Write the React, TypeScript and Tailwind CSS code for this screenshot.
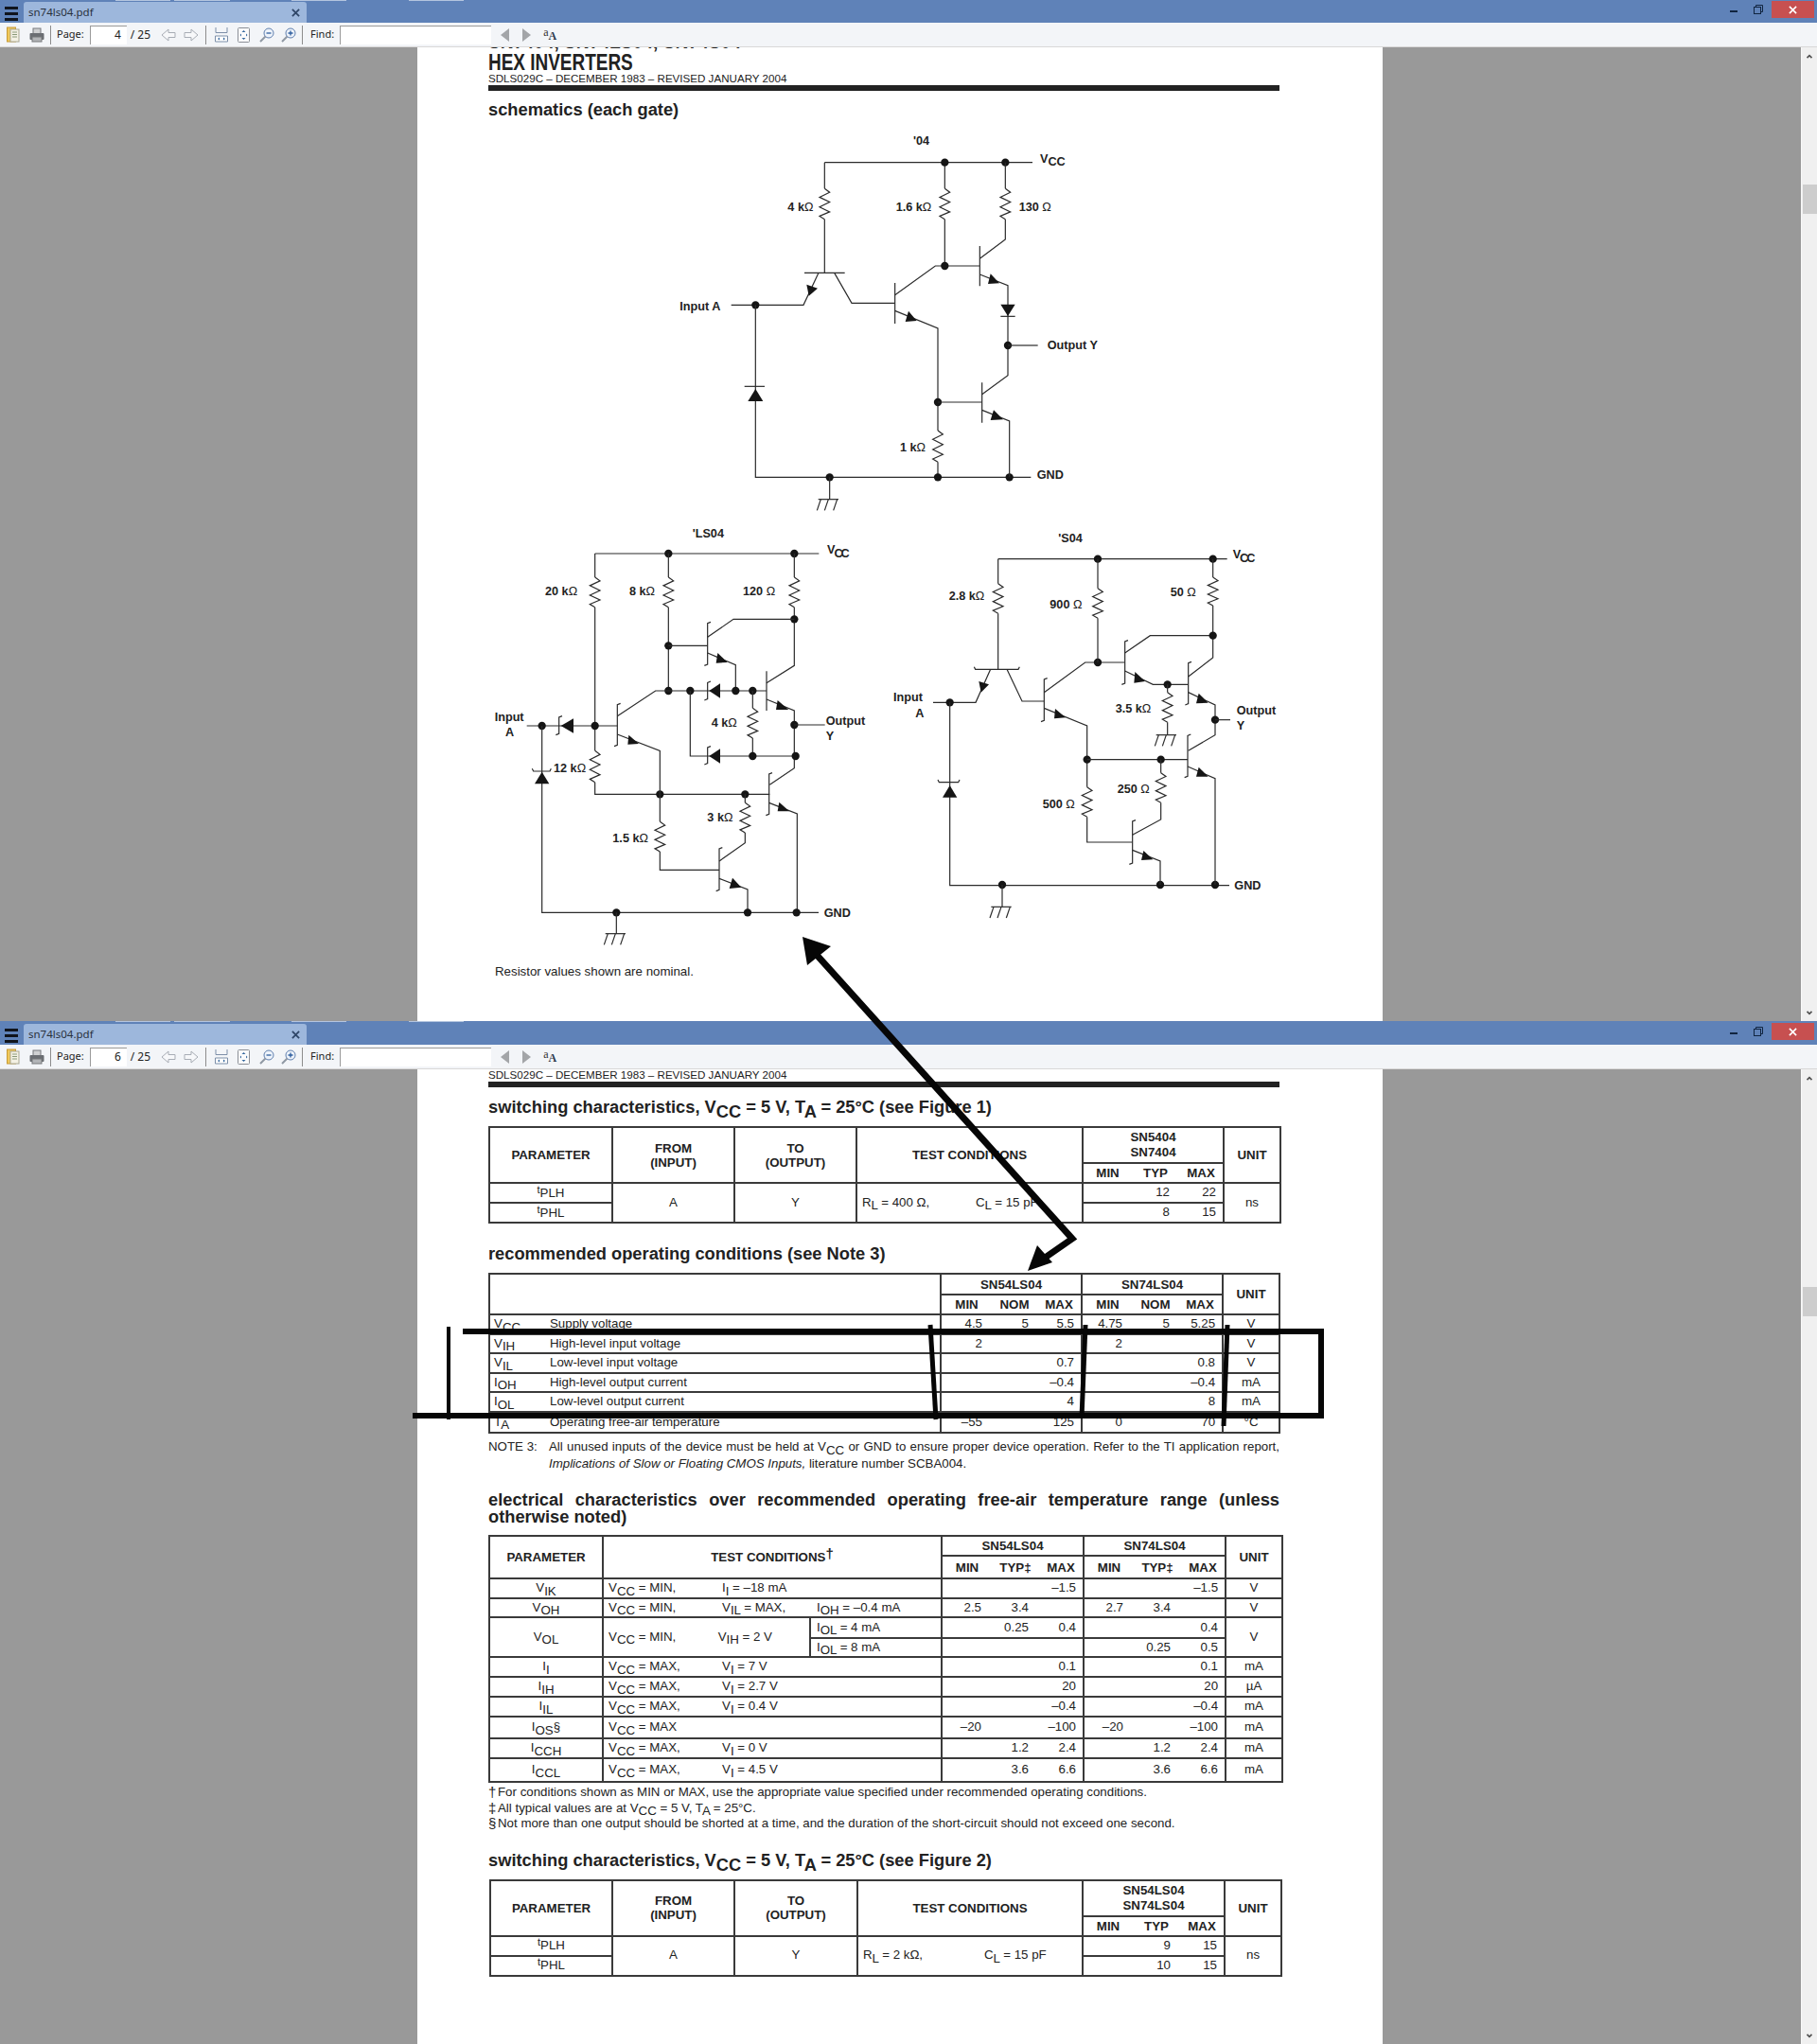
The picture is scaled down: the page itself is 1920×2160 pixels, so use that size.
import type { ReactNode } from "react";

const INK = "#2b2b2b";
const cell = "border-2 border-[#3a3a3a] p-0 pb-[2px] text-center";
const head = "border-2 border-[#3a3a3a] p-0 text-center font-bold";

function Sy({ a, b }: { a: string; b: string }) {
  return (
    <span className="whitespace-nowrap">
      {a}
      <sub className="text-[1em] bottom-[-0.3em]">{b}</sub>
    </span>
  );
}

function Tp({ b }: { b: string }) {
  return (
    <span className="whitespace-nowrap">
      <span className="relative top-[-3px] text-[11px]">t</span>
      <sub className="text-[1em] bottom-[-0.1em]">{b}</sub>
    </span>
  );
}

/* schematic helpers, coords are 3x page pixels */
function W({ p }: { p: string }) {
  return <polyline points={p} fill="none" stroke={INK} strokeWidth="3.6" />;
}
function D({ x, y }: { x: number; y: number }) {
  return <circle cx={x} cy={y} r="12.5" fill="#151515" />;
}
function A({ p }: { p: string }) {
  return <polygon points={p} fill="#151515" />;
}
function R({ x, y, h }: { x: number; y: number; h: number }) {
  const s = [0.12, 0.28, 0.44, 0.6, 0.76, 0.9];
  const pts = s.map((f, i) => `${i % 2 ? x - 16 : x + 16},${y + h * f}`).join(" ");
  return <W p={`${x},${y} ${pts} ${x},${y + h}`} />;
}
function Hook({ x, a, b }: { x: number; a: number; b: number }) {
  return <W p={`${x + 10},${a} ${x},${a + 4} ${x},${b - 4} ${x - 10},${b}`} />;
}
function HookH({ y, a, b }: { y: number; a: number; b: number }) {
  return <W p={`${a},${y - 8} ${a + 4},${y} ${b - 4},${y} ${b},${y - 8}`} />;
}
function Gnd({ x, y, w = 32 }: { x: number; y: number; w?: number }) {
  return (
    <>
      <W p={`${x - w},${y} ${x + w},${y}`} />
      <W p={`${x - w + 8},${y} ${x - w - 4},${y + 35}`} />
      <W p={`${x},${y} ${x - 12},${y + 35}`} />
      <W p={`${x + w - 4},${y} ${x + w - 16},${y + 35}`} />
    </>
  );
}
function L({ x, y, t, o, anchor }: { x: number; y: number; t: string; o?: boolean; anchor?: "end" | "middle" }) {
  return (
    <text x={x} y={y + 13} fontSize="38" fontWeight="700" fill="#222" textAnchor={anchor}>
      {t}
      {o && <tspan fontWeight="400">Ω</tspan>}
    </text>
  );
}
function Vcc({ x, y, tight }: { x: number; y: number; tight?: boolean }) {
  return (
    <text x={x} y={y + 13} fontSize="38" fontWeight="700" fill="#222">
      V
      <tspan dx={tight ? -3 : 0} dy="11" letterSpacing={tight ? -6 : 0}>
        CC
      </tspan>
    </text>
  );
}

function Schematic04() {
  return (
    <svg viewBox="0 0 1560 1260" className="block h-[420px] w-[520px] shrink-0">
      <L x={855} y={57} t="'04" />
      <W p="574,125 1233,125" />
      <W p="574,125 574,208" />
      <R x={574} y={208} h={97} />
      <W p="574,305 574,475" />
      <W p="510,475 638,475" />
      <W p="555,475 507,577 278,577" />
      <A p="517,512 552,524 524,548" />
      <W p="605,475 660,571 797,571" />
      <D x={355} y={577} />
      <W p="355,577 355,1123 1228,1123" />
      <W p="320,835 384,835" />
      <A p="355,843 331,882 379,882" />
      <D x={590} y={1123} />
      <W p="590,1123 590,1193" />
      <Gnd x={586} y={1193} />
      <W p="797,507 797,636" />
      <W p="797,545 925,453 1066,453" />
      <W p="797,595 933,651 933,975" />
      <A p="840,596 866,627 830,630" />
      <R x={933} y={975} h={100} />
      <W p="933,1075 933,1123" />
      <D x={933} y={885} />
      <D x={933} y={1123} />
      <D x={1160} y={1123} />
      <W p="955,125 955,208" />
      <R x={955} y={208} h={97} />
      <W p="955,305 955,453" />
      <D x={955} y={125} />
      <D x={1147} y={125} />
      <D x={955} y={453} />
      <W p="1147,125 1147,208" />
      <R x={1147} y={208} h={97} />
      <W p="1147,305 1147,369 1066,430" />
      <W p="1066,390 1066,517" />
      <W p="1066,480 1155,515 1155,800 1073,860" />
      <A p="1100,478 1128,508 1092,510" />
      <A p="1132,575 1178,575 1155,612" />
      <W p="1132,613 1178,613" />
      <D x={1155} y={705} />
      <W p="1155,705 1250,705" />
      <W p="1073,823 1073,950" />
      <W p="933,885 1073,885" />
      <W p="1073,910 1160,945 1160,1123" />
      <A p="1110,910 1140,940 1100,942" />
      <L x={115} y={582} t="Input A" />
      <L x={457} y={265} t="4 k" o />
      <L x={800} y={265} t="1.6 k" o />
      <L x={1190} y={265} t="130 " o />
      <L x={813} y={1028} t="1 k" o />
      <L x={1280} y={705} t="Output Y" />
      <L x={1247} y={1115} t="GND" />
      <Vcc x={1257} y={112} />
    </svg>
  );
}

function SchematicLS() {
  return (
    <svg viewBox="0 0 1260 1395" className="block h-[465px] w-[420px] shrink-0">
      <L x={695} y={40} t="'LS04" />
      <W p="386,105 1096,105" />
      <D x={619} y={105} />
      <D x={1018} y={105} />
      <W p="386,105 386,180" />
      <R x={386} y={180} h={95} />
      <W p="386,275 386,730" />
      <R x={386} y={730} h={100} />
      <W p="386,830 386,868 940,868" />
      <D x={592} y={868} />
      <D x={862} y={868} />
      <W p="619,105 619,180" />
      <R x={619} y={180} h={95} />
      <W p="619,275 619,540" />
      <D x={619} y={397} />
      <D x={619} y={540} />
      <W p="1018,105 1018,180" />
      <R x={1018} y={180} h={95} />
      <W p="1018,275 1018,460 930,515" />
      <D x={1018} y={313} />
      <Hook x={743} a={322} b={460} />
      <W p="743,370 825,313 1018,313" />
      <W p="619,397 743,397" />
      <W p="743,420 832,458 832,540" />
      <A p="775,420 806,450 770,452" />
      <W p="457,620 578,540 930,540" />
      <D x={688} y={540} />
      <D x={832} y={540} />
      <D x={886} y={540} />
      <A p="748,540 783,517 783,563" />
      <Hook x={743} a={510} b={570} />
      <Hook x={457} a={580} b={716} />
      <W p="170,651 457,651" />
      <W p="457,678 592,730 592,955" />
      <A p="493,680 525,708 490,710" />
      <D x={218} y={651} />
      <D x={386} y={651} />
      <A p="278,651 318,628 318,674" />
      <Hook x={272} a={620} b={680} />
      <W p="930,478 930,603" />
      <W p="930,567 1018,603 1018,785 940,838" />
      <A p="965,570 1000,600 960,600" />
      <D x={1018} y={648} />
      <W p="1018,648 1115,648" />
      <W p="886,540 886,595" />
      <R x={886} y={595} h={95} />
      <W p="886,690 886,747" />
      <W p="688,540 688,747 1022,747" />
      <D x={886} y={747} />
      <D x={1022} y={747} />
      <A p="748,747 783,724 783,770" />
      <Hook x={743} a={716} b={774} />
      <Hook x={938} a={800} b={935} />
      <W p="938,895 1027,930 1027,1243" />
      <A p="970,893 1002,922 965,922" />
      <W p="862,868 862,895" />
      <R x={862} y={895} h={95} />
      <W p="862,990 862,1022 780,1080" />
      <R x={592} y={955} h={95} />
      <W p="592,1050 592,1108 780,1108" />
      <Hook x={780} a={1037} b={1175} />
      <W p="780,1135 870,1170 870,1243" />
      <A p="822,1133 850,1163 812,1167" />
      <W p="218,651 218,1243 1095,1243" />
      <A p="218,797 195,835 241,835" />
      <HookH y={795} a={187} b={247} />
      <D x={454} y={1243} />
      <D x={870} y={1243} />
      <D x={1025} y={1243} />
      <W p="454,1243 454,1310" />
      <Gnd x={451} y={1310} />
      <L x={855} y={225} t="120 " o />
      <L x={228} y={225} t="20 k" o />
      <L x={495} y={225} t="8 k" o />
      <L x={68} y={622} t="Input" />
      <L x={102} y={672} t="A" />
      <L x={1118} y={634} t="Output" />
      <L x={1118} y={684} t="Y" />
      <L x={755} y={640} t="4 k" o />
      <L x={255} y={785} t="12 k" o />
      <L x={742} y={942} t="3 k" o />
      <L x={442} y={1008} t="1.5 k" o />
      <L x={1112} y={1243} t="GND" />
      <Vcc x={1122} y={93} tight />
    </svg>
  );
}

function SchematicS() {
  return (
    <svg viewBox="0 0 1350 1395" className="block h-[465px] w-[450px] shrink-0">
      <L x={595} y={55} t="'S04" />
      <W p="404,122 1130,122" />
      <D x={720} y={122} />
      <D x={1085} y={122} />
      <W p="404,122 404,200" />
      <R x={404} y={200} h={95} />
      <W p="404,295 404,472" />
      <HookH y={472} a={328} b={472} />
      <W p="380,472 333,577 198,577" />
      <A p="343,510 375,520 350,545" />
      <W p="432,472 480,573 550,573" />
      <D x={251} y={577} />
      <W p="251,577 251,1157 1137,1157" />
      <A p="251,840 228,878 274,878" />
      <HookH y={830} a={213} b={282} />
      <D x={417} y={1155} />
      <D x={918} y={1155} />
      <D x={1092} y={1155} />
      <W p="417,1155 417,1225" />
      <Gnd x={414} y={1225} />
      <Hook x={550} a={500} b={638} />
      <W p="550,545 680,450 806,450" />
      <D x={720} y={450} />
      <W p="550,595 686,651 686,845" />
      <A p="585,597 618,625 582,628" />
      <D x={686} y={758} />
      <R x={686} y={845} h={95} />
      <W p="686,940 686,1020 830,1020" />
      <W p="720,122 720,215" />
      <R x={720} y={215} h={95} />
      <W p="720,310 720,450" />
      <Hook x={806} a={380} b={520} />
      <W p="806,420 886,365 1085,365" />
      <W p="806,477 895,520 1006,520" />
      <A p="838,480 870,510 835,515" />
      <D x={941} y={520} />
      <W p="941,520 941,545" />
      <R x={941} y={545} h={95} />
      <W p="941,640 941,680" />
      <Gnd x={937} y={680} />
      <W p="1085,122 1085,180" />
      <R x={1085} y={180} h={90} />
      <W p="1085,270 1085,435 1007,495" />
      <D x={1085} y={365} />
      <Hook x={1007} a={448} b={585} />
      <W p="1007,545 1092,585 1092,680 1007,730" />
      <A p="1040,548 1070,578 1032,580" />
      <D x={1092} y={632} />
      <W p="1092,632 1140,632" />
      <Hook x={1005} a={678} b={815} />
      <W p="686,758 1005,758" />
      <D x={920} y={758} />
      <W p="1005,780 1092,818 1092,1155" />
      <A p="1040,782 1070,812 1032,812" />
      <W p="920,758 920,800" />
      <R x={920} y={800} h={95} />
      <W p="920,895 920,948 830,997" />
      <Hook x={830} a={950} b={1090} />
      <W p="830,1045 918,1080 918,1155" />
      <A p="865,1047 895,1075 858,1077" />
      <L x={248} y={240} t="2.8 k" o />
      <L x={568} y={265} t="900 " o />
      <L x={950} y={226} t="50 " o />
      <L x={72} y={561} t="Input" />
      <L x={142} y={611} t="A" />
      <L x={1160} y={602} t="Output" />
      <L x={1160} y={651} t="Y" />
      <L x={776} y={597} t="3.5 k" o />
      <L x={782} y={851} t="250 " o />
      <L x={545} y={900} t="500 " o />
      <L x={1153} y={1157} t="GND" />
      <Vcc x={1148} y={108} tight />
    </svg>
  );
}

function Toolbar({ page }: { page: number }) {
  return (
    <div className="flex h-[26px] items-center border-b border-[#d8d8d8] bg-[#f3f5f8] text-[11px] text-[#222] font-['Noto_Sans',sans-serif]">
      <svg viewBox="0 0 14 17" className="ml-[7px] h-[17px] w-[14px]">
        <rect x="0.5" y="1" width="9" height="15" fill="#f0c85a" stroke="#c79a35" />
        <rect x="4" y="3" width="9" height="13" fill="#f4f1e4" stroke="#a9a793" />
        <path d="M6 6h5M6 8.5h5M6 11h5" stroke="#8a9a7a" />
      </svg>
      <svg viewBox="0 0 16 16" className="ml-[10px] h-[16px] w-[16px]">
        <rect x="4" y="1" width="8" height="6" fill="#cfd0d2" stroke="#77797c" />
        <rect x="0.5" y="6" width="15" height="7" rx="1" fill="#6b6e73" />
        <rect x="3" y="10" width="10" height="5" fill="#b3b5b8" stroke="#76787b" />
      </svg>
      <div className="ml-[6px] h-[20px] w-px bg-[#8d8d8d]" />
      <span className="ml-[6px]">Page:</span>
      <div className="ml-[6px] flex h-[20px] w-[39px] items-center justify-end border-l border-t border-[#9a9a9a] bg-white pr-[6px] text-[12px]">
        {page}
      </div>
      <span className="ml-[4px] text-[12px]">/ 25</span>
      <svg viewBox="0 0 16 14" className="ml-[11px] h-[14px] w-[16px]" fill="#f7f8fa" stroke="#a8adb5">
        <path d="M8 1 1 7l7 6V9.5h7v-5H8z" />
      </svg>
      <svg viewBox="0 0 16 14" className="ml-[8px] h-[14px] w-[16px]" fill="#f7f8fa" stroke="#a8adb5">
        <path d="M8 1l7 6-7 6V9.5H1v-5h7z" />
      </svg>
      <div className="ml-[7px] h-[20px] w-px bg-[#8d8d8d]" />
      <svg viewBox="0 0 14 16" className="ml-[9px] h-[16px] w-[14px]" fill="none">
        <path d="M1 0v5.500h12V0" stroke="#7d8fa8" />
        <path d="M.5 9h13v6H.5z" stroke="#7d8fa8" fill="#fff" />
        <path d="M3 12l2-1.500v3zM11 12l-2-1.500v3z" fill="#35689f" />
      </svg>
      <svg viewBox="0 0 13 16" className="ml-[10px] h-[16px] w-[13px]" fill="none">
        <rect x="0.5" y="0.5" width="12" height="15" rx="1" stroke="#8b8f96" fill="#fbfbfc" />
        <path d="M6.500 3l2 2h-4zM6.500 13l2-2h-4zM2.500 8l1.500-1.500v3zM10.500 8 9 6.500v3z" fill="#35689f" />
      </svg>
      <svg viewBox="0 0 16 16" className="ml-[10px] h-[16px] w-[16px]" fill="none">
        <circle cx="10" cy="6" r="5" stroke="#5f7fae" fill="#eef3fa" />
        <path d="M6.500 9.500 1 15" stroke="#8f98a3" strokeWidth="2" />
        <path d="M7.500 6h5" stroke="#2d5d9e" strokeWidth="1.300" />
      </svg>
      <svg viewBox="0 0 16 16" className="ml-[7px] h-[16px] w-[16px]" fill="none">
        <circle cx="10" cy="6" r="5" stroke="#5f7fae" fill="#eef3fa" />
        <path d="M6.500 9.500 1 15" stroke="#8f98a3" strokeWidth="2" />
        <path d="M7.500 6h5M10 3.500v5" stroke="#2d5d9e" strokeWidth="1.300" />
      </svg>
      <div className="ml-[6px] h-[20px] w-px bg-[#8d8d8d]" />
      <span className="ml-[8px]">Find:</span>
      <div className="ml-[6px] h-[20px] w-[160px] border-l border-t border-[#9a9a9a] bg-white" />
      <svg viewBox="0 0 10 14" className="ml-[10px] h-[14px] w-[10px]">
        <path d="M9 0v14L0 7z" fill="#a3a5a8" />
      </svg>
      <svg viewBox="0 0 10 14" className="ml-[12px] h-[14px] w-[10px]">
        <path d="M1 0v14l9-7z" fill="#a3a5a8" />
      </svg>
      <span className="ml-[13px] flex font-['Liberation_Serif',serif] text-[#333]">
        <span className="relative top-[-3px] text-[12px] leading-none">a</span>
        <span className="relative top-[1px] text-[12px] font-bold leading-none text-[#2d3a4d]">A</span>
      </span>
    </div>
  );
}

function TitleBar({ height }: { height: string }) {
  return (
    <div className={`relative flex shrink-0 items-end bg-[#5f82b8] ${height}`}>
      <span className="absolute left-[122px] top-0 h-px w-[58px] bg-[#b4c5df]" />
      <span className="absolute left-[184px] top-0 h-px w-[59px] bg-[#b4c5df]" />
      <span className="absolute left-[308px] top-0 h-px w-[58px] bg-[#b4c5df]" />
      <span className="absolute left-[432px] top-0 h-px w-[58px] bg-[#b4c5df]" />
      <div className="mb-[2px] ml-[5px] flex h-[15px] w-[14px] flex-col justify-between">
        <span className="h-[3px] bg-[#10141c]" />
        <span className="h-[3px] bg-[#10141c]" />
        <span className="h-[3px] bg-[#10141c]" />
      </div>
      <div className="ml-[6px] flex h-[22px] w-[299px] items-center justify-between rounded-t-[3px] bg-[#9db7dc] pl-[5px] pr-[7px] font-['Noto_Sans',sans-serif] text-[11.500px] text-[#28313d]">
        sn74ls04.pdf
        <svg viewBox="0 0 10 10" className="h-[9px] w-[9px]">
          <path d="M1 1l8 8M9 1l-8 8" stroke="#2f4668" strokeWidth="2" />
        </svg>
      </div>
      <div className="mb-[11px] ml-auto h-[2px] w-[8px] bg-[#10243f]" />
      <svg viewBox="0 0 10 10" className="mb-[9px] ml-[17px] h-[10px] w-[10px]" fill="none">
        <path d="M2.500 2.500V.5h7v7h-2" stroke="#10243f" />
        <rect x="0.5" y="2.500" width="7" height="7" stroke="#10243f" />
      </svg>
      <div className="mb-[5px] ml-[9px] mr-[3px] flex h-[18px] w-[45px] items-center justify-center bg-[#c75050]">
        <svg viewBox="0 0 10 10" className="h-[9px] w-[9px]">
          <path d="M1 1l8 8M9 1l-8 8" stroke="#fff" strokeWidth="1.800" />
        </svg>
      </div>
    </div>
  );
}

function Scrollbar({ thumb }: { thumb: string }) {
  return (
    <div className="flex w-[17px] shrink-0 flex-col items-center border-l border-[#f8f8f8] bg-[#f0f0f0]">
      <svg viewBox="0 0 8 6" className="mt-[7px] h-[5px] w-[8px]" fill="none">
        <path d="M1 5l3-3 3 3" stroke="#505050" strokeWidth="2" />
      </svg>
      <div className={`w-[15px] bg-[#cdcdcd] ${thumb}`} />
      <svg viewBox="0 0 8 6" className="mb-[6px] mt-auto h-[5px] w-[8px]" fill="none">
        <path d="M1 1l3 3 3-3" stroke="#505050" strokeWidth="2" />
      </svg>
    </div>
  );
}

function Window({ page, bar, thumb, className, children }: { page: number; bar: string; thumb: string; className: string; children: ReactNode }) {
  return (
    <div className={`flex flex-col overflow-hidden ${className}`}>
      <TitleBar height={bar} />
      <Toolbar page={page} />
      <div className="flex min-h-0 flex-1">
        <div className="flex min-w-0 flex-1 justify-center bg-[#999999] pr-[1px]">
          <div className="relative h-full w-[1020px] overflow-hidden bg-white pl-[75px] pr-[109px] text-[#222]">{children}</div>
        </div>
        <Scrollbar thumb={thumb} />
      </div>
    </div>
  );
}

function Rule() {
  return (
    <>
      <div className="h-[14px] whitespace-nowrap text-[11.600px] leading-[14px]">SDLS029C – DECEMBER 1983 – REVISED JANUARY 2004</div>
      <div className="h-[6px] w-[836px] bg-[#222]" />
    </>
  );
}

function H2({ className, children }: { className: string; children: ReactNode }) {
  return <h2 className={`h-[22px] whitespace-nowrap text-[18.300px] font-bold leading-[22px] ${className}`}>{children}</h2>;
}

const colsFirst = (
  <colgroup>
    <col className="w-[130px]" />
    <col className="w-[129px]" />
    <col className="w-[129px]" />
    <col className="w-[239px]" />
    <col className="w-[52px]" />
    <col className="w-[50px]" />
    <col className="w-[47px]" />
    <col className="w-[60px]" />
  </colgroup>
);

const colsLast = (
  <colgroup>
    <col className="w-[129px]" />
    <col className="w-[129px]" />
    <col className="w-[130px]" />
    <col className="w-[238px]" />
    <col className="w-[53px]" />
    <col className="w-[50px]" />
    <col className="w-[47px]" />
    <col className="w-[60px]" />
  </colgroup>
);

function Switching({ mark, cols, part1, part2, rl, cl, gap, nums }: { mark: string; cols: ReactNode; part1: string; part2: string; rl: ReactNode; cl: ReactNode; gap: string; nums: string[][] }) {
  return (
    <table className={`table-fixed border-collapse text-[13.300px] leading-[15px] ${mark}`}>
      {cols}
      <thead>
        <tr>
          <th rowSpan={2} className={head}>PARAMETER</th>
          <th rowSpan={2} className={head}>FROM<br />(INPUT)</th>
          <th rowSpan={2} className={head}>TO<br />(OUTPUT)</th>
          <th rowSpan={2} className={head}>TEST CONDITIONS</th>
          <th colSpan={3} className={`${head} h-[38px] leading-[16px]`}>{part1}<br />{part2}</th>
          <th rowSpan={2} className={head}>UNIT</th>
        </tr>
        <tr className="h-[21px] font-bold">
          <th className={`${head} border-r-0`}>MIN</th>
          <th className={`${head} border-x-0`}>TYP</th>
          <th className={`${head} border-l-0`}>MAX</th>
        </tr>
      </thead>
      <tbody>
        <tr className="h-[21px]">
          <td className={cell}><Tp b="PLH" /></td>
          <td rowSpan={2} className={cell}>A</td>
          <td rowSpan={2} className={cell}>Y</td>
          <td rowSpan={2} className={`${cell} text-left`}>
            <div className="flex pl-[5px]">
              <span className={gap}>{rl}</span>
              <span>{cl}</span>
            </div>
          </td>
          <td className={`${cell} border-r-0`} />
          <td className={`${cell} border-x-0 pr-[10px] text-right`}>{nums[0][0]}</td>
          <td className={`${cell} border-l-0 pr-[7px] text-right`}>{nums[0][1]}</td>
          <td rowSpan={2} className={cell}>ns</td>
        </tr>
        <tr className="h-[21px]">
          <td className={cell}><Tp b="PHL" /></td>
          <td className={`${cell} border-r-0`} />
          <td className={`${cell} border-x-0 pr-[10px] text-right`}>{nums[1][0]}</td>
          <td className={`${cell} border-l-0 pr-[7px] text-right`}>{nums[1][1]}</td>
        </tr>
      </tbody>
    </table>
  );
}

const recommended = [
  { s: ["V", "CC"], d: "Supply voltage", v: ["4.5", "5", "5.5", "4.75", "5", "5.25"], u: "V", h: "h-[21px]" },
  { s: ["V", "IH"], d: "High-level input voltage", v: ["2", "", "", "2", "", ""], u: "V", h: "h-[20px]" },
  { s: ["V", "IL"], d: "Low-level input voltage", v: ["", "", "0.7", "", "", "0.8"], u: "V", h: "h-[21px]" },
  { s: ["I", "OH"], d: "High-level output current", v: ["", "", "–0.4", "", "", "–0.4"], u: "mA", h: "h-[20px]" },
  { s: ["I", "OL"], d: "Low-level output current", v: ["", "", "4", "", "", "8"], u: "mA", h: "h-[21px]" },
  { s: ["T", "A"], d: "Operating free-air temperature", v: ["–55", "", "125", "0", "", "70"], u: "°C", h: "h-[22px]" },
];

function Recommended() {
  return (
    <table className="mt-[9px] w-[835px] table-fixed border-collapse text-[13.300px] leading-[15px]">
      <colgroup>
        <col className="w-[58px]" />
        <col className="w-[419px]" />
        <col className="w-[54px]" />
        <col className="w-[48px]" />
        <col className="w-[47px]" />
        <col className="w-[54px]" />
        <col className="w-[48px]" />
        <col className="w-[47px]" />
        <col className="w-[60px]" />
      </colgroup>
      <thead>
        <tr className="h-[22px]">
          <th colSpan={2} rowSpan={2} className={head} />
          <th colSpan={3} className={head}>SN54LS04</th>
          <th colSpan={3} className={head}>SN74LS04</th>
          <th rowSpan={2} className={head}>UNIT</th>
        </tr>
        <tr className="h-[21px]">
          <th className={`${head} border-r-0`}>MIN</th>
          <th className={`${head} border-x-0`}>NOM</th>
          <th className={`${head} border-l-0`}>MAX</th>
          <th className={`${head} border-r-0`}>MIN</th>
          <th className={`${head} border-x-0`}>NOM</th>
          <th className={`${head} border-l-0`}>MAX</th>
        </tr>
      </thead>
      <tbody>
        {recommended.map((r) => (
          <tr key={r.d} className={r.h}>
            <td className={`${cell} border-r-0 pl-[4px] text-left`}><Sy a={r.s[0]} b={r.s[1]} /></td>
            <td className={`${cell} border-l-0 pl-[6px] text-left`}>{r.d}</td>
            <td className={`${cell} border-r-0 pr-[10px] text-right`}>{r.v[0]}</td>
            <td className={`${cell} border-x-0 pr-[9px] text-right`}>{r.v[1]}</td>
            <td className={`${cell} border-l-0 pr-[7px] text-right`}>{r.v[2]}</td>
            <td className={`${cell} border-r-0 pr-[11px] text-right`}>{r.v[3]}</td>
            <td className={`${cell} border-x-0 pr-[9px] text-right`}>{r.v[4]}</td>
            <td className={`${cell} border-l-0 pr-[7px] text-right`}>{r.v[5]}</td>
            <td className={cell}>{r.u}</td>
          </tr>
        ))}
      </tbody>
    </table>
  );
}

function Conds({ items }: { items: ReactNode[] }) {
  return (
    <div className="flex pl-[5px]">
      <span className="w-[120px]">{items[0]}</span>
      {items[1] && <span className="w-[100px]">{items[1]}</span>}
      {items[2] && <span>{items[2]}</span>}
    </div>
  );
}

function Vals({ v }: { v: string[] }) {
  return (
    <>
      <td className={`${cell} border-r-0 pr-[11px] text-right`}>{v[0]}</td>
      <td className={`${cell} border-x-0 pr-[11px] text-right`}>{v[1]}</td>
      <td className={`${cell} border-l-0 pr-[7px] text-right`}>{v[2]}</td>
      <td className={`${cell} border-r-0 pr-[11px] text-right`}>{v[3]}</td>
      <td className={`${cell} border-x-0 pr-[11px] text-right`}>{v[4]}</td>
      <td className={`${cell} border-l-0 pr-[7px] text-right`}>{v[5]}</td>
    </>
  );
}

const VCC = <Sy a="V" b="CC" />;

function Electrical() {
  return (
    <table className="mt-[10px] w-[838px] table-fixed border-collapse text-[13.300px] leading-[15px]">
      <colgroup>
        <col className="w-[120px]" />
        <col className="w-[219px]" />
        <col className="w-[139px]" />
        <col className="w-[53px]" />
        <col className="w-[50px]" />
        <col className="w-[47px]" />
        <col className="w-[53px]" />
        <col className="w-[50px]" />
        <col className="w-[47px]" />
        <col className="w-[60px]" />
      </colgroup>
      <thead>
        <tr className="h-[21px]">
          <th rowSpan={2} className={head}>PARAMETER</th>
          <th colSpan={2} rowSpan={2} className={head}>TEST CONDITIONS<sup className="text-[15px] top-[-3px]">†</sup></th>
          <th colSpan={3} className={head}>SN54LS04</th>
          <th colSpan={3} className={head}>SN74LS04</th>
          <th rowSpan={2} className={head}>UNIT</th>
        </tr>
        <tr className="h-[24px]">
          <th className={`${head} border-r-0`}>MIN</th>
          <th className={`${head} border-x-0`}>TYP‡</th>
          <th className={`${head} border-l-0`}>MAX</th>
          <th className={`${head} border-r-0`}>MIN</th>
          <th className={`${head} border-x-0`}>TYP‡</th>
          <th className={`${head} border-l-0`}>MAX</th>
        </tr>
      </thead>
      <tbody>
        <tr className="h-[21px]">
          <td className={cell}><Sy a="V" b="IK" /></td>
          <td colSpan={2} className={`${cell} text-left`}><Conds items={[<>{VCC} = MIN,</>, <><Sy a="I" b="I" /> = –18 mA</>]} /></td>
          <Vals v={["", "", "–1.5", "", "", "–1.5"]} />
          <td className={cell}>V</td>
        </tr>
        <tr className="h-[20px]">
          <td className={cell}><Sy a="V" b="OH" /></td>
          <td colSpan={2} className={`${cell} text-left`}><Conds items={[<>{VCC} = MIN,</>, <><Sy a="V" b="IL" /> = MAX,</>, <><Sy a="I" b="OH" /> = –0.4 mA</>]} /></td>
          <Vals v={["2.5", "3.4", "", "2.7", "3.4", ""]} />
          <td className={cell}>V</td>
        </tr>
        <tr className="h-[22px]">
          <td rowSpan={2} className={cell}><Sy a="V" b="OL" /></td>
          <td rowSpan={2} className={`${cell} text-left`}><Conds items={[<>{VCC} = MIN,</>, <><Sy a="V" b="IH" /> = 2 V</>]} /></td>
          <td className={`${cell} pl-[6px] text-left`}><Sy a="I" b="OL" /> = 4 mA</td>
          <Vals v={["", "0.25", "0.4", "", "", "0.4"]} />
          <td rowSpan={2} className={cell}>V</td>
        </tr>
        <tr className="h-[20px]">
          <td className={`${cell} pl-[6px] text-left`}><Sy a="I" b="OL" /> = 8 mA</td>
          <Vals v={["", "", "", "", "0.25", "0.5"]} />
        </tr>
        <tr className="h-[21px]">
          <td className={cell}><Sy a="I" b="I" /></td>
          <td colSpan={2} className={`${cell} text-left`}><Conds items={[<>{VCC} = MAX,</>, <><Sy a="V" b="I" /> = 7 V</>]} /></td>
          <Vals v={["", "", "0.1", "", "", "0.1"]} />
          <td className={cell}>mA</td>
        </tr>
        <tr className="h-[21px]">
          <td className={cell}><Sy a="I" b="IH" /></td>
          <td colSpan={2} className={`${cell} text-left`}><Conds items={[<>{VCC} = MAX,</>, <><Sy a="V" b="I" /> = 2.7 V</>]} /></td>
          <Vals v={["", "", "20", "", "", "20"]} />
          <td className={cell}>µA</td>
        </tr>
        <tr className="h-[21px]">
          <td className={cell}><Sy a="I" b="IL" /></td>
          <td colSpan={2} className={`${cell} text-left`}><Conds items={[<>{VCC} = MAX,</>, <><Sy a="V" b="I" /> = 0.4 V</>]} /></td>
          <Vals v={["", "", "–0.4", "", "", "–0.4"]} />
          <td className={cell}>mA</td>
        </tr>
        <tr className="h-[23px]">
          <td className={cell}><Sy a="I" b="OS" />§</td>
          <td colSpan={2} className={`${cell} text-left`}><Conds items={[<>{VCC} = MAX</>]} /></td>
          <Vals v={["–20", "", "–100", "–20", "", "–100"]} />
          <td className={cell}>mA</td>
        </tr>
        <tr className="h-[21px]">
          <td className={cell}><Sy a="I" b="CCH" /></td>
          <td colSpan={2} className={`${cell} text-left`}><Conds items={[<>{VCC} = MAX,</>, <><Sy a="V" b="I" /> = 0 V</>]} /></td>
          <Vals v={["", "1.2", "2.4", "", "1.2", "2.4"]} />
          <td className={cell}>mA</td>
        </tr>
        <tr className="h-[25px]">
          <td className={cell}><Sy a="I" b="CCL" /></td>
          <td colSpan={2} className={`${cell} text-left`}><Conds items={[<>{VCC} = MAX,</>, <><Sy a="V" b="I" /> = 4.5 V</>]} /></td>
          <Vals v={["", "3.6", "6.6", "", "3.6", "6.6"]} />
          <td className={cell}>mA</td>
        </tr>
      </tbody>
    </table>
  );
}

function Foot({ mark, children }: { mark: string; children: ReactNode }) {
  return (
    <p className="flex items-start">
      <span className="w-[10px] shrink-0 text-[15px] leading-[16px]">{mark}</span>
      <span>{children}</span>
    </p>
  );
}

// the marker strokes somebody drew across both windows
function Scribbles() {
  return (
    <svg viewBox="0 0 1920 2160" className="pointer-events-none absolute inset-0 h-[2160px] w-[1920px]" fill="none" stroke="#060606">
      <polyline points="862,1008 1133,1309 1097,1334" strokeWidth="7" />
      <polygon points="848,990 878,1000 853,1020" fill="#060606" stroke="none" />
      <polygon points="1086,1343 1096,1316 1112,1334" fill="#060606" stroke="none" />
      <path d="M489 1407H1399" strokeWidth="6" />
      <path d="M436 1496H1399" strokeWidth="6" />
      <path d="M1396 1405V1498" strokeWidth="6" />
      <path d="M474 1402V1500" strokeWidth="4" />
      <path d="M983 1400L989 1500" strokeWidth="5" />
      <path d="M1147 1400L1143 1498" strokeWidth="5" />
      <path d="M1297 1400L1293 1507" strokeWidth="5" />
    </svg>
  );
}

export default function App() {
  return (
    <div className="relative flex h-[2160px] w-[1920px] flex-col overflow-hidden bg-white font-['Liberation_Sans',Arial,sans-serif]">
      <Window page={4} bar="h-[24px]" thumb="mt-[133px] h-[31px]" className="h-[1079px]">
        <div className="-mt-[19px] h-[23px] origin-left scale-x-[0.8] whitespace-nowrap text-[24px] font-bold leading-[24px]">SN7404, SN74LS04, SN74S04</div>
        <div className="h-[24px] origin-left scale-x-[0.79] whitespace-nowrap text-[24px] font-bold leading-[24px]">HEX INVERTERS</div>
        <div className="-mt-[2px]">
          <Rule />
        </div>
        <H2 className="mt-[9px]">schematics (each gate)</H2>
        <div className="ml-[164px] mt-[3px]">
          <Schematic04 />
        </div>
        <div className="-ml-[16px] flex">
          <SchematicLS />
          <SchematicS />
        </div>
        <p className="ml-[7px] mt-[4px] text-[13.300px] leading-[16px]">Resistor values shown are nominal.</p>
      </Window>
      <Window page={6} bar="h-[25px]" thumb="mt-[218px] h-[31px]" className="min-h-0 flex-1">
        <div className="-mt-[1px]">
          <Rule />
        </div>
        <H2 className="mt-[10px]">
          switching characteristics, <Sy a="V" b="CC" /> = 5 V, <Sy a="T" b="A" /> = 25°C (see Figure 1)
        </H2>
        <Switching
          mark="mt-[9px] w-[836px]"
          cols={colsFirst}
          part1="SN5404"
          part2="SN7404"
          rl={<><Sy a="R" b="L" /> = 400 Ω,</>}
          cl={<><Sy a="C" b="L" /> = 15 pF</>}
          gap="w-[120px]"
          nums={[["12", "22"], ["8", "15"]]}
        />
        <H2 className="mt-[21px]">recommended operating conditions (see Note 3)</H2>
        <Recommended />
        <div className="mt-[5px] flex w-[836px] text-[13.300px] leading-[18px]">
          <span className="w-[64px] shrink-0">NOTE 3:</span>
          <p className="text-justify">
            All unused inputs of the device must be held at <Sy a="V" b="CC" /> or GND to ensure proper device operation. Refer to the TI application report,{" "}
            <i>Implications of Slow or Floating CMOS Inputs,</i> literature number SCBA004.
          </p>
        </div>
        <h2 className="mt-[20px] w-[836px] text-justify text-[18.300px] font-bold leading-[18px]">
          electrical characteristics over recommended operating free-air temperature range (unless otherwise noted)
        </h2>
        <Electrical />
        <div className="mt-[2px] text-[13.300px] leading-[16.500px]">
          <Foot mark="†">For conditions shown as MIN or MAX, use the appropriate value specified under recommended operating conditions.</Foot>
          <Foot mark="‡">All typical values are at <Sy a="V" b="CC" /> = 5 V, <Sy a="T" b="A" /> = 25°C.</Foot>
          <Foot mark="§">Not more than one output should be shorted at a time, and the duration of the short-circuit should not exceed one second.</Foot>
        </div>
        <H2 className="mt-[19px]">
          switching characteristics, <Sy a="V" b="CC" /> = 5 V, <Sy a="T" b="A" /> = 25°C (see Figure 2)
        </H2>
        <Switching
          mark="ml-[1px] mt-[9px] w-[836px]"
          cols={colsLast}
          part1="SN54LS04"
          part2="SN74LS04"
          rl={<><Sy a="R" b="L" /> = 2 kΩ,</>}
          cl={<><Sy a="C" b="L" /> = 15 pF</>}
          gap="w-[128px]"
          nums={[["9", "15"], ["10", "15"]]}
        />
      </Window>
      <Scribbles />
    </div>
  );
}
